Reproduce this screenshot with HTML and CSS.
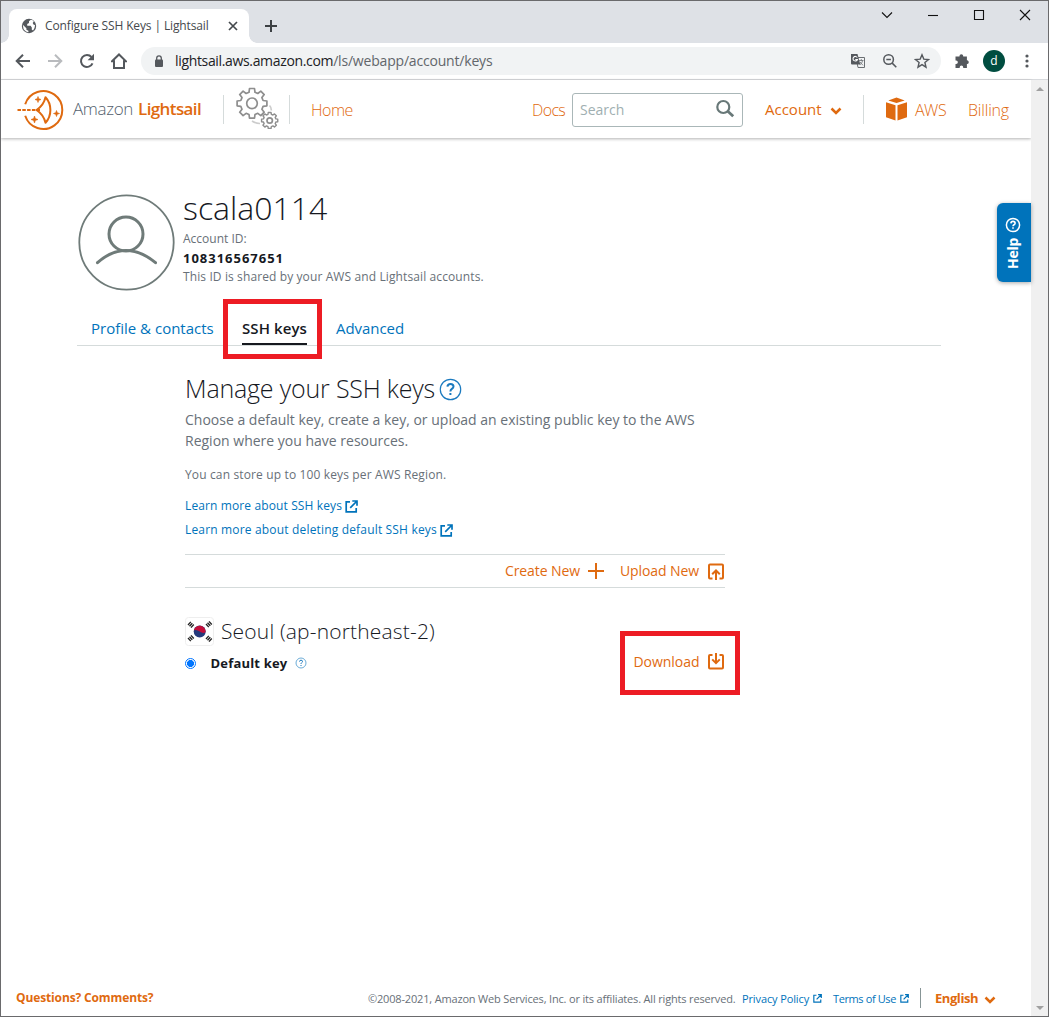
FILE: index.html
```html
<!DOCTYPE html>
<html lang="en">
<head>
<meta charset="utf-8">
<title>Configure SSH Keys | Lightsail</title>
<link rel="stylesheet" href="styles.css">
</head>
<body>
<svg class="defs" width="0" height="0">
  <symbol id="ext" viewBox="0 0 13 13"><path d="M5 1.800H1.200v10h10V8M7.300 1H12v4.700M11.500 1.500L5.200 7.800" fill="none" stroke="currentColor" stroke-width="1.700"/></symbol>
  <symbol id="chev" viewBox="0 0 12 8"><path d="M1.500 1.500L6 6l4.500-4.500" fill="none" stroke="currentColor" stroke-width="2.500"/></symbol>
</svg>
<div class="window">
  <div class="titlebar">
    <div class="tab">
      <svg class="globe" width="16" height="16" viewBox="0 0 16 16"><circle cx="8" cy="8" r="7.200" fill="#54585d"/><path d="M9.800 1.800L8 3.300v1.600L6.200 6v1.800h3.400l1.200 1.700v2.300l1.300.7 1.400-2.400.6-2.900-1.600-.6-.8-1.600 1.100-1.500-1.100-1.200zM1.800 6.800l3.600 3.400v1.500l2 1v1.500L5 13.500 2.600 11.300z" fill="#fff"/></svg>
      <span class="tab-title">Configure SSH Keys | Lightsail</span>
      <svg class="tab-close" width="10" height="10" viewBox="0 0 10 10"><path d="M1 1l8 8M9 1L1 9" stroke="#45494d" stroke-width="1.700"/></svg>
    </div>
    <svg class="newtab" width="12" height="12" viewBox="0 0 12 12"><path d="M6 0v12M0 6h12" stroke="#3c4043" stroke-width="2"/></svg>
    <div class="controls">
      <svg width="12" height="12" viewBox="0 0 12 12"><path d="M1 3.500l5 5 5-5"/></svg>
      <svg width="12" height="12" viewBox="0 0 12 12"><path d="M1 6.500h10"/></svg>
      <svg width="12" height="12" viewBox="0 0 12 12"><path d="M1.500 1.500h9v9h-9z"/></svg>
      <svg width="12" height="12" viewBox="0 0 12 12"><path d="M1 1l10 10M11 1L1 11"/></svg>
    </div>
  </div>

  <div class="toolbar">
    <div class="nav">
      <svg width="16" height="16" viewBox="0 0 16 16"><path d="M15 8H2M8 1.700L1.700 8 8 14.300" stroke="#54585d"/></svg>
      <svg width="16" height="16" viewBox="0 0 16 16"><path d="M1 8h13M8 1.700L14.300 8 8 14.300" stroke="#b9bbbe"/></svg>
      <svg width="16" height="16" viewBox="0 0 16 16"><path d="M13.500 10.300A6 6 0 1 1 12.500 4" stroke="#54585d"/><path d="M15 .8v6.400H8.600z" fill="#54585d" stroke="none"/></svg>
      <svg width="16" height="16" viewBox="0 0 16 16"><path d="M1 8.300L8 1.500l7 6.800h-2V15H3V8.300z" stroke="#54585d"/></svg>
    </div>
    <div class="omnibox">
      <svg class="lock" width="10" height="13" viewBox="0 0 10 13"><rect x="1" y="4.500" width="8" height="7.500" rx="1" fill="#54585d"/><path d="M2.700 5V3.200a2.300 2.300 0 0 1 4.600 0V5" fill="none" stroke="#54585d" stroke-width="1.300"/></svg>
      <span class="url"><span class="host">lightsail.aws.amazon.com</span><span class="path">/ls/webapp/account/keys</span></span>
      <div class="omni-icons">
        <svg width="16" height="16" viewBox="0 0 16 16"><path d="M6 4.500h8.500v10H8z" fill="#f1f3f4" stroke="#6b6f73"/><path d="M1 1h6.500l2.800 10.500H2q-1 0-1-1z" fill="#54585d"/><path d="M7.300 4.500A2.300 2.300 0 1 0 7.500 6.500H5.300" fill="none" stroke="#fff" stroke-width="1.100"/><path d="M9 7.500h4.500M11.300 6v1.500M12.700 7.500q-.5 2.500-3 4.500M10 9l3 3.300" fill="none" stroke="#6b6f73" stroke-width=".8"/></svg>
        <svg width="16" height="16" viewBox="0 0 16 16"><circle cx="6.600" cy="6.500" r="4.800" fill="none" stroke="#54585d" stroke-width="1.500"/><path d="M10.200 10.100l4.100 4.100M4.300 6.500h4.600" stroke="#54585d" stroke-width="1.500"/></svg>
        <svg width="16" height="16" viewBox="0 0 16 16"><path d="M8 1.800l1.800 4.300 4.700.4-3.600 3 1.100 4.700L8 11.700l-4 2.500 1.100-4.700-3.600-3 4.700-.4z" fill="none" stroke="#54585d" stroke-width="1.400"/></svg>
      </div>
    </div>
    <svg class="puzzle" width="16" height="16" viewBox="0 0 16 16"><path d="M1.500 3.500h4V3a1.800 1.800 0 0 1 3.700 0v.5h3.700v3.800h.4a1.900 1.900 0 0 1 0 3.700h-.4v4H9.200v-.7a1.700 1.700 0 0 0-3.500 0v.7H1.500v-4h.6a1.700 1.700 0 0 0 0-3.500h-.6z" fill="#54585d"/></svg>
    <div class="avatar">d</div>
    <svg class="dots" width="4" height="14" viewBox="0 0 4 14"><circle cx="2" cy="2" r="1.600"/><circle cx="2" cy="7" r="1.600"/><circle cx="2" cy="12" r="1.600"/></svg>
  </div>

  <div class="viewport">
    <div class="page">
      <header class="header">
        <svg class="logo" width="48" height="42" viewBox="0 0 48 42"><g fill="none" stroke="#df6a10"><path d="M8.200 15.200A19 19 0 1 1 8.200 26.800" stroke-width="2"/><path d="M.5 21H23" stroke-width="2" stroke-dasharray="3.500 1.300"/><path d="M28.500 8.200C27 15 22.500 19 19.500 21c3 2 7.500 6 9 12.800 6.500-7 6.500-18.600 0-25.600z" stroke-width="2" stroke-linejoin="round"/></g><path d="M21 7.500l.8 2.200 2.200.8-2.200.8-.8 2.200-.8-2.200-2.200-.8 2.200-.8zM17.500 27l.9 2.600 2.600.9-2.600.9-.9 2.600-.9-2.600-2.600-.9 2.600-.9zM39.500 21.500l.8 2.200 2.200.8-2.200.8-.8 2.200-.8-2.200-2.200-.8 2.200-.8z" fill="#df6a10" stroke="#df6a10" stroke-width=".6"/></svg>
        <span class="brand"><span class="brand-a">Amazon</span> <span class="brand-b">Lightsail</span></span>
        <i class="rule rule-1"></i>
        <svg class="gears" width="44" height="42" viewBox="0 0 44 42"><g fill="none" stroke="#8e8e8e" stroke-width="1.700" stroke-linejoin="round"><path d="M13.500 1.500h5l.5 3.800 2.800 1.200 3-2.300 3.400 3.400-2.300 3 1.200 2.900 3.800.5v4.800l-3.800.5-1.200 2.900 2.300 3-3.400 3.400-3-2.300-2.800 1.200-.5 3.700h-5l-.5-3.700-2.900-1.200-3 2.300-3.400-3.400 2.300-3-1.200-2.900-3.700-.5V14l3.700-.5L6 10.600l-2.300-3 3.400-3.400 3 2.300L13 5.300z"/><circle cx="16" cy="16.300" r="5.300"/><path stroke-width="1.500" d="M32.500 25.300h3l.3 2 1.700.7 1.600-1.200 2 2-1.200 1.700.7 1.600 2 .3v2.800l-2 .3-.7 1.600 1.200 1.700-2 2-1.600-1.200-1.700.7-.3 2h-3l-.3-2-1.600-.7-1.700 1.200-2-2 1.200-1.700-.7-1.600-2-.3v-2.800l2-.3.7-1.600-1.200-1.700 2-2 1.700 1.200 1.600-.7z" transform="translate(1.700 1.700) scale(.94)"/><circle cx="33.700" cy="33.500" r="2.700"/><path stroke="#ccc" d="M33.500 18.500q2 2 1.800 5M16 34q4 2.600 8 2.500"/></g></svg>
        <i class="rule rule-2"></i>
        <a class="home">Home</a>
        <a class="docs">Docs</a>
        <div class="search"><span>Search</span><svg width="20" height="20" viewBox="0 0 20 20"><circle cx="8.300" cy="8" r="6" fill="none" stroke="#687878" stroke-width="2.200"/><path d="M12.800 12.300l5.400 5" stroke="#687878" stroke-width="2.800"/></svg></div>
        <a class="account">Account</a>
        <svg class="account-chev" width="12" height="8"><use href="#chev"/></svg>
        <i class="rule rule-3"></i>
        <svg class="cube" width="23" height="24" viewBox="0 0 23 24"><path d="M3.300 3.500L11.500.5l8.200 3-8.200 2.500zM1 5.300l9.500 3V23.500L1 20.300zM22 5.300l-9.500 3v15.200l9.500-3.200z" fill="#df6a10"/></svg>
        <a class="aws">AWS</a>
        <a class="billing">Billing</a>
      </header>

      <main class="main">
        <section class="profile">
          <svg class="person" width="98" height="98" viewBox="0 0 98 98"><g fill="none" stroke="#6f7b79"><circle cx="49.500" cy="49.500" r="47.200" stroke-width="1.800"/><circle cx="49" cy="41" r="17" stroke-width="3"/><path d="M20.500 69.700Q34 57.500 49 57.500T78.500 69.700" stroke-width="3" stroke-linecap="round"/></g></svg>
          <div class="who">
            <h1>scala0114</h1>
            <p class="id-label">Account ID:</p>
            <p class="id">108316567651</p>
            <p class="id-note">This ID is shared by your AWS and Lightsail accounts.</p>
          </div>
        </section>
        <nav class="tabs">
          <a class="t1">Profile &amp; contacts</a>
          <a class="t2">SSH keys</a>
          <a class="t3">Advanced</a>
        </nav>

        <section class="keys">
          <h2><span>Manage your SSH keys</span><svg width="23" height="23" viewBox="0 0 23 23"><circle cx="11.500" cy="11.500" r="10.200" fill="#fff" stroke="#1b7abf" stroke-width="1.200"/><path d="M8.400 8.600q.3-2.700 3.100-2.700 3 0 3 2.600 0 1.400-1.600 2.400-1.500 1-1.500 2.600M11.400 14.900v2.100" fill="none" stroke="#1b7abf" stroke-width="2"/></svg></h2>
          <p class="lead">Choose a default key, create a key, or upload an existing public key to the AWS<br>Region where you have resources.</p>
          <p class="limit">You can store up to 100 keys per AWS Region.</p>
          <a class="learn learn-1"><span>Learn more about SSH keys</span><svg width="13" height="13"><use href="#ext"/></svg></a>
          <a class="learn learn-2"><span>Learn more about deleting default SSH keys</span><svg width="13" height="13"><use href="#ext"/></svg></a>
          <div class="actions">
            <a class="create">Create New</a>
            <svg class="plus" width="16" height="16" viewBox="0 0 16 16"><path d="M8 0v16M0 8h16" stroke="#df6a10" stroke-width="2"/></svg>
            <a class="upload">Upload New</a>
            <svg width="16" height="17" viewBox="0 0 16 17"><path d="M4.500 15.500H2q-1 0-1-1v-12q0-1 1-1h12q1 0 1 1v12q0 1-1 1h-2.500M8 17V7.500M4.200 11.300L8 7.500l3.800 3.800" fill="none" stroke="#df6a10" stroke-width="2"/></svg>
          </div>
          <div class="region">
            <svg class="flag" width="29" height="29" viewBox="0 0 29 29"><rect x=".5" y=".5" width="28" height="28" rx="3" fill="#fff" stroke="#eee"/><circle cx="14.700" cy="14.500" r="6" fill="#253a7c"/><path d="M8.800 13.300A6 6 0 0 1 20.600 15.300q-3 1.500-5.900-.8T8.800 13.300z" fill="#c40e3a"/><g stroke="#222" stroke-width="1.300"><path d="M3 8l2.800-3.100M4.500 9.300l2.800-3.100M6 10.600l2.800-3.100M21 7l2.800 3.100M22.500 5.700l2.800 3.100M24 4.400L26.800 7.500M3 21l2.800 3.100M4.500 19.700l2.800 3.100M6 18.400l2.800 3.100M21 22l2.800-3.100M22.500 23.300l2.800-3.100M24 24.600l2.800-3.100"/></g></svg>
            <h3>Seoul (ap-northeast-2)</h3>
          </div>
          <div class="key-row">
            <i class="radio"></i>
            <span class="key-name">Default key</span>
            <svg class="tip" width="12" height="12" viewBox="0 0 12 12"><circle cx="6" cy="6" r="5" fill="#fff" stroke="#5ba3d3" stroke-width=".9"/><path d="M4.500 4.600q.1-1.400 1.500-1.400 1.500 0 1.500 1.300 0 .7-.8 1.200-.7.500-.7 1.300M6 8v1" fill="none" stroke="#1b7abf"/></svg>
            <a class="download">Download</a>
            <svg class="dl" width="16" height="17" viewBox="0 0 16 17"><path d="M4.500 2H2Q1 2 1 3v11.500q0 1 1 1h12q1 0 1-1V3q0-1-1-1h-2.500M8 0v10M4.200 6.400L8 10.200l3.800-3.800" fill="none" stroke="#df6a10" stroke-width="2"/></svg>
          </div>
        </section>
      </main>

      <footer class="footer">
        <a class="questions">Questions? Comments?</a>
        <span class="copy">©2008-2021, Amazon Web Services, Inc. or its affiliates. All rights reserved.</span>
        <a class="legal privacy">Privacy Policy</a><svg class="e" width="9" height="9"><use href="#ext"/></svg>
        <a class="legal terms">Terms of Use</a><svg class="e" width="9" height="9"><use href="#ext"/></svg>
        <i class="foot-rule"></i>
        <a class="english">English</a><svg class="lang-chev" width="12" height="8"><use href="#chev"/></svg>
      </footer>
    </div>
    <div class="scrollbar"><i class="up"></i><i class="down"></i></div>
  </div>
  <div class="help"><svg width="16" height="16" viewBox="0 0 16 16"><circle cx="8" cy="8" r="6.600" fill="none" stroke="#fff" stroke-width="1.500"/><path d="M5.900 6.400q.1-2 2.100-2 2.100 0 2.100 1.800 0 1-1.100 1.600-1 .6-1 1.500M8 10.300v1.500" fill="none" stroke="#fff" stroke-width="1.600"/></svg><span>Help</span></div>
  <div class="mark mark-tab"></div>
  <div class="mark mark-download"></div>
</div>
</body>
</html>
```
FILE: styles.css
```css
* { box-sizing: border-box; }
body { margin: 0; font-family: "Open Sans", "Noto Sans", sans-serif; color: #16191f; }
h1, h2, h3, p { margin: 0; font-weight: 400; }
svg { display: block; flex: none; }
i { display: block; flex: none; }
span, a, h1, h2, h3, p { white-space: nowrap; }
.defs { position: absolute; }

.window { position: relative; width: 1049px; height: 1017px; border: 1px solid #6a6a6c; display: flex; flex-direction: column; background: #fff; overflow: hidden; }

/* browser chrome */
.titlebar { height: 42px; flex: none; background: #dee1e6; display: flex; padding-left: 8px; }
.tab { width: 240px; height: 34px; margin-top: 8px; background: #fff; border-radius: 8px 8px 0 0; display: flex; align-items: center; padding-left: 12px; position: relative; }
.tab::before, .tab::after { content: ""; position: absolute; bottom: 0; width: 8px; height: 8px; }
.tab::before { left: -8px; background: radial-gradient(circle at 0 0, #dee1e6 7.5px, #fff 8px); }
.tab::after { right: -8px; background: radial-gradient(circle at 100% 0, #dee1e6 7.5px, #fff 8px); }
.tab-title { width: 183px; margin: -1px 0 0 8px; font-size: 12px; letter-spacing: -.13px; color: #45494d; }
.newtab { margin: 19px 0 0 16px; }
.controls { display: flex; gap: 34px; margin: 8px 17px 0 auto; }
.controls path { fill: none; stroke: #111; stroke-width: 1.1; }
.toolbar { height: 37px; flex: none; border-bottom: 1px solid #d8dadd; display: flex; align-items: center; padding-left: 14px; }
.nav { display: flex; gap: 16px; }
.nav path { fill: none; stroke-width: 2; }
.nav path[stroke="none"] { fill: #54585d; }
.omnibox { width: 800px; height: 28px; margin-left: 14px; border-radius: 14px; background: #f1f3f4; display: flex; align-items: center; padding-left: 13px; }
.url { margin-left: 11px; font-size: 14px; line-height: 28px; color: #62666b; }
.host { color: #202124; letter-spacing: -.34px; }
.path { letter-spacing: -.19px; }
.omni-icons { display: flex; gap: 16px; margin: 0 11px 0 auto; }
.puzzle { margin-left: 13px; }
.avatar { width: 22px; height: 22px; margin-left: 13px; border-radius: 50%; background: #004d40; color: #fff; font-size: 12px; line-height: 21px; text-align: center; }
.dots { margin-left: 20px; fill: #54585d; }

.viewport { flex: 1; display: flex; min-height: 0; }
.page { width: 1030px; display: flex; flex-direction: column; }
.scrollbar { width: 17px; background: #f0f0f0; display: flex; flex-direction: column; justify-content: space-between; align-items: center; padding: 7px 0 6px; }
.up, .down { border: 4px solid transparent; }
.up { border-top: 0; border-bottom-color: #a0a0a0; }
.down { border-bottom: 0; border-top-color: #a0a0a0; }

/* site header */
.header { height: 58px; flex: none; display: flex; align-items: center; padding-left: 16px; font-size: 16px; font-weight: 300; color: #df6a10; box-shadow: 0 1px 3px rgba(0,0,0,.3); }
.logo { margin-top: 2px; }
.brand { margin: -2px 0 0 8px; font-size: 17px; width: 150px; display: flex; gap: 5px; }
.brand-a { width: 60px; letter-spacing: -.35px; color: #53606d; }
.brand-b { font-weight: 600; letter-spacing: -.6px; }
.rule { width: 1px; height: 29px; background: #d5dbdb; }
.gears { margin: -2px 0 0 12px; }
.rule-2 { margin-left: 9px; }
.home { width: 42px; margin: 1px 0 0 21px; letter-spacing: -.5px; }
.docs { width: 33px; margin: 1px 0 0 179px; letter-spacing: -.65px; }
.search { width: 171px; height: 34px; margin: 2px 0 0 7px; border: 1px solid #aab7b8; border-radius: 3px; display: flex; align-items: center; justify-content: space-between; padding: 0 7px 0 7px; font-size: 14px; font-weight: 400; color: #a0afb1; }
.search span { margin-top: -1px; }
.search svg { margin-top: -3px; }
.account { width: 57px; margin-left: 22px; font-size: 15px; font-weight: 500; }
.account-chev { margin: 3px 0 0 8px; }
.rule-3 { margin-left: 21px; }
.cube { margin: 0 0 0 21px; }
.aws { width: 31px; margin: 1px 0 0 7px; letter-spacing: -.5px; }
.billing { margin: 1px 0 0 22px; letter-spacing: -.18px; }

/* profile */
.main { flex: 1; padding: 55px 0 0 76px; }
.profile { display: flex; height: 98px; }
.who { margin-left: 8px; font-size: 12px; color: #687078; }
h1 { font-size: 32px; font-weight: 300; line-height: 40px; margin-top: -5px; color: #16191f; }
.id-label { line-height: 20px; margin-top: 1px; }
.id { font-size: 13px; font-weight: 700; line-height: 20px; margin-top: -1px; letter-spacing: .98px; color: #16191f; }
.id-note { line-height: 18px; letter-spacing: .11px; }
.tabs { width: 864px; height: 55px; border-bottom: 1px solid #d5dbdb; display: flex; padding: 22px 0 0 14px; font-size: 15px; line-height: 30px; color: #0073bb; }
.t1 { width: 151px; }
.t2 { width: 65px; height: 32px; border-bottom: 2px solid #16191f; font-weight: 600; letter-spacing: .1px; color: #16191f; }
.t3 { margin-left: 29px; letter-spacing: -.05px; }

/* key management */
.keys { width: 540px; margin-left: 108px; }
h2 { display: flex; align-items: center; height: 40px; margin-top: 22px; font-size: 25px; font-weight: 300; letter-spacing: -.19px; line-height: 40px; }
h2 span { width: 254px; }
h2 svg { margin-top: 3px; }
.lead { margin-top: 1px; font-size: 14px; line-height: 21px; color: #687078; }
.limit { margin-top: 14px; font-size: 12px; line-height: 20px; letter-spacing: .14px; color: #687078; }
.learn { display: flex; align-items: center; height: 24px; font-size: 12px; color: #0073bb; }
.learn svg { margin: 2px 0 0 3px; }
.learn-1 { margin-top: 8px; letter-spacing: .12px; }
.learn-2 { letter-spacing: .17px; }
.actions { display: flex; align-items: center; justify-content: flex-end; height: 34px; margin-top: 13px; padding-right: 1px; border: solid #d5dbdb; border-width: 1px 0; font-size: 14px; letter-spacing: -.1px; color: #df6a10; }
.actions svg { margin-left: 8px; }
.create, .upload { margin-top: -1px; }
.create { width: 75px; }
.upload { width: 80px; margin-left: 16px; }
.region { display: flex; align-items: center; height: 30px; margin-top: 28px; }
h3 { margin-left: 7px; font-size: 21px; font-weight: 300; letter-spacing: .17px; line-height: 30px; }
.key-row { display: flex; align-items: center; height: 34px; }
.radio { width: 11px; height: 11px; border: 1px solid #0075ff; border-radius: 50%; background: radial-gradient(circle, #0075ff 3.2px, #fff 3.8px); }
.key-name { width: 77px; margin-left: 14.5px; font-size: 13px; font-weight: 700; letter-spacing: .19px; }
.tip { margin-left: 7px; }
.download { width: 66px; margin: -3px 8.500px 0 auto; font-size: 14px; letter-spacing: -.04px; color: #df6a10; }
.dl { margin: -3px 1px 0 0; }

/* footer */
.footer { display: flex; align-items: center; height: 36px; padding-left: 15px; color: #df6a10; font-size: 12px; }
.questions { width: 352px; font-weight: 700; letter-spacing: -.13px; margin-top: -2px; }
.copy { width: 367px; font-size: 11px; letter-spacing: -.17px; color: #687078; }
.legal { margin-left: 7px; width: 67px; font-size: 11px; letter-spacing: -.12px; color: #0073bb; }
.terms { width: 63px; margin-left: 11px; letter-spacing: -.39px; }
.e { margin-left: 4px; color: #0073bb; }
.foot-rule { width: 1px; height: 20px; margin-left: 11px; background: #879596; }
.english { width: 43px; margin: -1px 6px 0 14px; font-size: 13px; font-weight: 700; letter-spacing: -.44px; }
.lang-chev { margin-top: 3px; }

/* overlays */
.help { position: absolute; left: 996px; top: 202px; width: 34px; height: 79px; border-radius: 6px 0 0 6px; background: #0073bb; box-shadow: 0 1px 4px rgba(0,0,0,.35); display: flex; flex-direction: column; align-items: center; padding: 14px 2px 0 0; gap: 5px; color: #fff; }
.help span { writing-mode: vertical-rl; transform: rotate(180deg); font-size: 14px; font-weight: 700; line-height: 20px; letter-spacing: -.28px; }
.mark { position: absolute; border: 5px solid #ed1c24; }
.mark-tab { left: 222px; top: 298px; width: 99px; height: 60px; }
.mark-download { left: 619px; top: 630px; width: 120px; height: 64px; }
```
